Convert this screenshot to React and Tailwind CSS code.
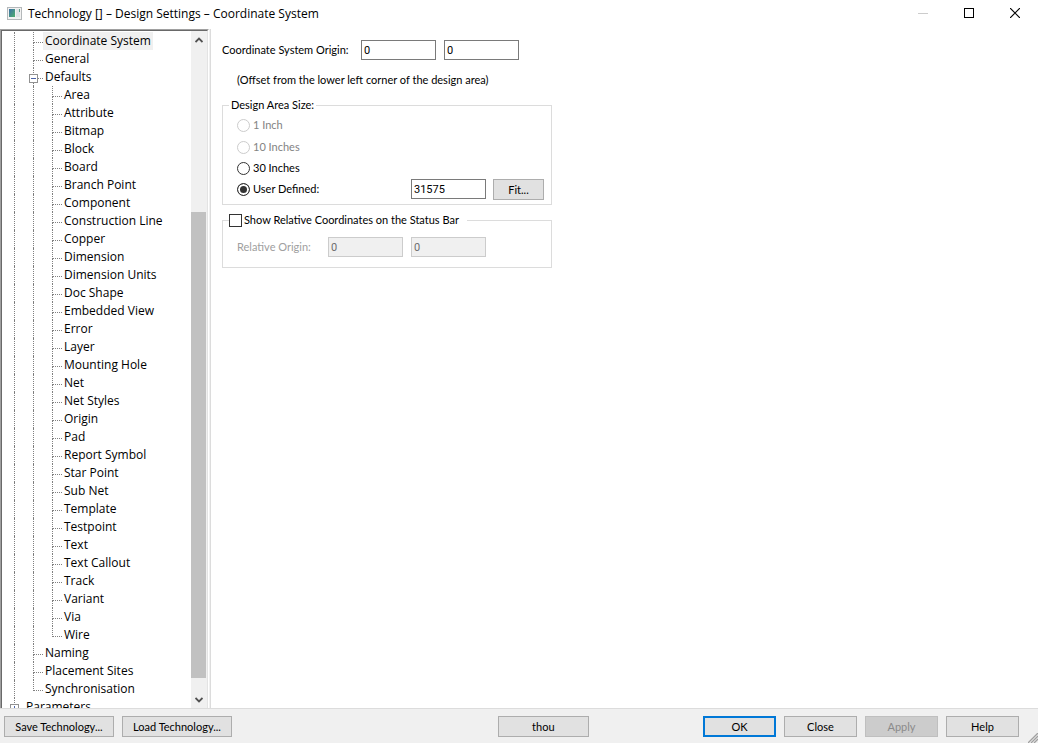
import React, { useState } from 'react';
import clsx from 'clsx';

const defaultsItems = [
  'Area', 'Attribute', 'Bitmap', 'Block', 'Board', 'Branch Point', 'Component', 'Construction Line',
  'Copper', 'Dimension', 'Dimension Units', 'Doc Shape', 'Embedded View', 'Error', 'Layer',
  'Mounting Hole', 'Net', 'Net Styles', 'Origin', 'Pad', 'Report Symbol', 'Star Point', 'Sub Net',
  'Template', 'Testpoint', 'Text', 'Text Callout', 'Track', 'Variant', 'Via', 'Wire',
];

const rows = [
  { label: 'Coordinate System', level: 1 },
  { label: 'General', level: 1 },
  { label: 'Defaults', level: 1, box: 'minus' },
  ...defaultsItems.map((label, i) => ({ label, level: 2, last: i === defaultsItems.length - 1 })),
  { label: 'Naming', level: 1 },
  { label: 'Placement Sites', level: 1 },
  { label: 'Synchronisation', level: 1, last: true },
  { label: 'Parameters', level: 0, box: 'plus' },
];

function TreeRow({ row, selected, onSelect }) {
  return (
    <li className="flex h-[18px]">
      {Array.from({ length: row.level }).map((_, i) => (
        <span key={i} className="w-[19px] shrink-0 border-l border-dotted border-[#808080]" />
      ))}
      <span className="relative w-[10px] shrink-0">
        <span className="block h-[11px] border-b border-l border-dotted border-[#808080]" />
        {!row.last && <span className="block h-[7px] border-l border-dotted border-[#808080]" />}
        {row.box && (
          <svg className="absolute -left-1 top-[6px]" width="9" height="9" viewBox="0 0 9 9" shapeRendering="crispEdges">
            <rect x="0.5" y="0.5" width="8" height="8" fill="#fff" stroke="#919191" />
            <path d="M2 4.5h5" stroke="#4b63a7" />
            {row.box === 'plus' && <path d="M4.5 2v5" stroke="#4b63a7" />}
          </svg>
        )}
      </span>
      <button type="button" onClick={onSelect}
        className={clsx('whitespace-nowrap px-0.5 leading-[18px]', selected && 'bg-[#f0f0f0]')}>
        {row.label}
      </button>
    </li>
  );
}

function PushButton({ children, className = 'w-[73px]', primary, disabled }) {
  return (
    <button type="button" disabled={disabled}
      className={clsx('h-[21px] shrink-0 whitespace-nowrap text-center',
        primary ? 'border-2 border-[#0078d7] bg-[#e1e1e1] leading-[17px]' : 'border leading-[19px]',
        !primary && (disabled ? 'border-[#bfbfbf] bg-[#cccccc] text-[#8a8a8a]' : 'border-[#adadad] bg-[#e1e1e1]'),
        className)}>
      {children}
    </button>
  );
}

function NumberBox({ label, value, disabled }) {
  return (
    <input type="text" aria-label={label} defaultValue={value} disabled={disabled}
      className="h-5 w-[75px] shrink-0 border border-[#7a7a7a] bg-white px-[2px] font-['Roboto','Liberation_Sans',sans-serif] text-[11px] outline-none disabled:border-[#cccccc] disabled:bg-[#f0f0f0] disabled:text-[#6d6d6d]" />
  );
}

function Radio({ label, checked, disabled, onChange }) {
  return (
    <label className={clsx('flex items-center gap-[3px]', disabled && 'text-[#838383]')}>
      <input type="radio" name="area-size" checked={checked} disabled={disabled} onChange={onChange}
        className="size-[13px] appearance-none rounded-full border border-[#333] bg-white checked:bg-[#333] checked:shadow-[inset_0_0_0_2px_white] disabled:border-[#cccccc]" />
      {label}
    </label>
  );
}

export default function App() {
  const [selected, setSelected] = useState('Coordinate System');
  const [size, setSize] = useState('user');
  const [relative, setRelative] = useState(false);

  return (
    <div className="flex h-screen flex-col overflow-hidden bg-white font-['Lato','Liberation_Sans',sans-serif] text-[11px] text-black">
      <header className="flex h-[29px] shrink-0 items-start pl-[7px] font-['Open_Sans','Noto_Sans',sans-serif] text-[12px]">
        <svg className="mt-[7px]" width="15" height="13" viewBox="0 0 15 13">
          <defs>
            <linearGradient id="screen" x1="0" y1="0" x2="1" y2="1">
              <stop offset="0" stopColor="#3c6fa8" />
              <stop offset="1" stopColor="#4fb06c" />
            </linearGradient>
          </defs>
          <rect x="0.5" y="0.5" width="14" height="12" fill="#f2f2f2" stroke="#b4b8ba" />
          <rect x="2" y="2" width="6" height="8" fill="url(#screen)" />
          <rect x="9" y="2" width="4" height="8" fill="#dfe3e6" />
          <rect x="12" y="2" width="1" height="3" fill="#5fa08c" />
        </svg>
        <h1 className="ml-[6px] flex-1 whitespace-nowrap leading-[28px]">Technology [] – Design Settings – Coordinate System</h1>
        <div className="flex h-[26px]">
          <button type="button" aria-label="Minimize" disabled className="flex w-[46px] items-center justify-center">
            <svg width="10" height="10" shapeRendering="crispEdges"><path d="M0 5.5h10" stroke="#ccc" /></svg>
          </button>
          <button type="button" aria-label="Maximize" className="flex w-[46px] items-center justify-center">
            <svg width="10" height="10" shapeRendering="crispEdges"><rect x="0.5" y="0.5" width="9" height="9" fill="none" stroke="#000" /></svg>
          </button>
          <button type="button" aria-label="Close window" className="flex w-[46px] items-center justify-center">
            <svg width="10" height="10"><path d="M0 0l10 10M10 0L0 10" stroke="#000" strokeWidth="1.2" /></svg>
          </button>
        </div>
      </header>

      <div className="flex min-h-0 flex-1 bg-[#f0f0f0]">
        <nav className="w-[209px] shrink-0 border-l border-r border-t border-l-[#a0a0a0] border-r-white border-t-[#a0a0a0] bg-white font-['Open_Sans','Noto_Sans',sans-serif] text-[12px]">
          <div className="flex h-full border-l border-r border-t border-l-[#696969] border-r-[#e3e3e3] border-t-[#696969]">
            <ul className="min-w-0 flex-1 overflow-hidden pl-3 pt-px">
              {rows.map((row) => (
                <TreeRow key={row.label} row={row} selected={selected === row.label} onSelect={() => setSelected(row.label)} />
              ))}
            </ul>
            <div className="flex w-4 flex-col bg-[#f0f0f0] pr-px">
              <button type="button" aria-label="Scroll up" className="flex h-[18px] items-center justify-center">
                <svg width="8" height="6"><path d="M0.5 5L4 1.5L7.5 5" fill="none" stroke="#505050" strokeWidth="1.8" /></svg>
              </button>
              <div className="flex flex-1 flex-col">
                <div className="flex-[163]" />
                <div className="flex-[466] bg-[#c1c1c1]" />
                <div className="flex-[13]" />
              </div>
              <button type="button" aria-label="Scroll down" className="flex h-[17px] items-center justify-center">
                <svg width="8" height="6"><path d="M0.5 1L4 4.5L7.5 1" fill="none" stroke="#505050" strokeWidth="1.8" /></svg>
              </button>
            </div>
          </div>
        </nav>

        <main className="ml-px flex-1 border-l border-[#dcdcdc] bg-white pl-[11px] pt-[11px]">
          <div className="flex items-center gap-2">
            <span className="w-[131px] whitespace-nowrap">Coordinate System Origin:</span>
            <NumberBox label="Origin X" value="0" />
            <NumberBox label="Origin Y" value="0" />
          </div>
          <p className="mt-3 pl-[15px] leading-4">(Offset from the lower left corner of the design area)</p>

          <fieldset className="mt-[9px] h-[108px] w-full max-w-[330px] border border-[#dcdcdc] pl-[14px] pr-[7px]">
            <legend className="-ml-2 px-0.5 leading-4">Design Area Size:</legend>
            <div className="flex flex-col pt-px">
              <div className="flex h-[22px] items-center"><Radio label="1 Inch" disabled /></div>
              <div className="flex h-[22px] items-center"><Radio label="10 Inches" disabled /></div>
              <div className="flex h-5 items-center">
                <Radio label="30 Inches" checked={size === '30'} onChange={() => setSize('30')} />
              </div>
              <div className="flex h-[22px] items-center gap-[7px]">
                <div className="flex-1"><Radio label="User Defined:" checked={size === 'user'} onChange={() => setSize('user')} /></div>
                <NumberBox label="User defined size" value="31575" />
                <PushButton className="w-[51px]">Fit...</PushButton>
              </div>
            </div>
          </fieldset>

          <fieldset className="mt-[7px] h-[56px] w-full max-w-[330px] border border-[#dcdcdc] pl-[14px]">
            <legend className="-ml-2 pr-2">
              <label className="flex items-center gap-0.5 leading-4">
                <input type="checkbox" checked={relative} onChange={(e) => setRelative(e.target.checked)}
                  className="size-[13px] appearance-none border border-[#333] bg-white checked:bg-[#333] checked:shadow-[inset_0_0_0_2px_white]" />
                Show Relative Coordinates on the Status Bar
              </label>
            </legend>
            <div className="mt-[9px] flex items-center gap-2">
              <span className="w-[83px] text-[#a0a0a0]">Relative Origin:</span>
              <NumberBox label="Relative X" value="0" disabled={!relative} />
              <NumberBox label="Relative Y" value="0" disabled={!relative} />
            </div>
          </fieldset>
        </main>
      </div>

      <footer className="relative flex h-[35px] shrink-0 gap-2 border-t border-[#dcdcdc] bg-[#f0f0f0] pl-1 pr-[19px] pt-[7px]">
        <PushButton className="w-[110px]">Save Technology...</PushButton>
        <PushButton className="w-[110px]">Load Technology...</PushButton>
        <div className="flex flex-1">
          <div className="flex-[17]" />
          <PushButton className="w-[91px]">thou</PushButton>
          <div className="flex-[7]" />
        </div>
        <PushButton primary>OK</PushButton>
        <PushButton>Close</PushButton>
        <PushButton disabled>Apply</PushButton>
        <PushButton>Help</PushButton>
        <svg className="absolute bottom-0 right-0" width="10" height="10">
          <path d="M0 10L10 0M3 10L10 3M6 10L10 6" stroke="#a0a0a0" strokeWidth="1.3" />
        </svg>
      </footer>
    </div>
  );
}
